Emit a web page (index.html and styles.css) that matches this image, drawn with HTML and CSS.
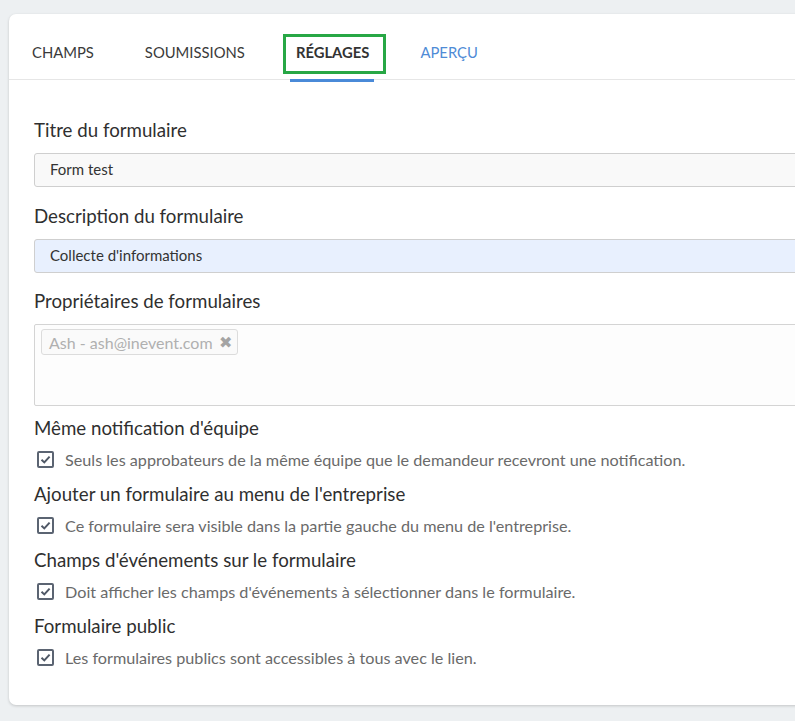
FILE: index.html
```html
<!DOCTYPE html>
<html lang="fr">
<head>
<meta charset="utf-8">
<title>Réglages</title>
<link rel="stylesheet" href="styles.css">
</head>
<body>
<div class="card">
  <nav class="tabs">
    <span class="tab">CHAMPS</span>
    <span class="tab">SOUMISSIONS</span>
    <span class="tab tab-active">RÉGLAGES</span>
    <span class="tab tab-link">APERÇU</span>
  </nav>
  <div class="content">
    <div class="field">
      <div class="label">Titre du formulaire</div>
      <div class="input">Form test</div>
    </div>
    <div class="field">
      <div class="label">Description du formulaire</div>
      <div class="input input-filled">Collecte d'informations</div>
    </div>
    <div class="field">
      <div class="label">Propriétaires de formulaires</div>
      <div class="tagbox">
        <span class="chip">Ash - ash@inevent.com <span class="chip-x">✖</span></span>
      </div>
    </div>
    <div class="options">
      <div class="option">
        <div class="label">Même notification d'équipe</div>
        <div class="check-row"><span class="checkbox"><svg viewBox="0 0 13 13" width="13" height="13"><path d="M2.5 6.8 L5.3 9.4 L10.6 3.6" fill="none" stroke="#4f5866" stroke-width="2"/></svg></span>Seuls les approbateurs de la même équipe que le demandeur recevront une notification.</div>
      </div>
      <div class="option">
        <div class="label">Ajouter un formulaire au menu de l'entreprise</div>
        <div class="check-row"><span class="checkbox"><svg viewBox="0 0 13 13" width="13" height="13"><path d="M2.5 6.8 L5.3 9.4 L10.6 3.6" fill="none" stroke="#4f5866" stroke-width="2"/></svg></span>Ce formulaire sera visible dans la partie gauche du menu de l'entreprise.</div>
      </div>
      <div class="option">
        <div class="label">Champs d'événements sur le formulaire</div>
        <div class="check-row"><span class="checkbox"><svg viewBox="0 0 13 13" width="13" height="13"><path d="M2.5 6.8 L5.3 9.4 L10.6 3.6" fill="none" stroke="#4f5866" stroke-width="2"/></svg></span>Doit afficher les champs d'événements à sélectionner dans le formulaire.</div>
      </div>
      <div class="option">
        <div class="label">Formulaire public</div>
        <div class="check-row"><span class="checkbox"><svg viewBox="0 0 13 13" width="13" height="13"><path d="M2.5 6.8 L5.3 9.4 L10.6 3.6" fill="none" stroke="#4f5866" stroke-width="2"/></svg></span>Les formulaires publics sont accessibles à tous avec le lien.</div>
      </div>
    </div>
  </div>
</div>
</body>
</html>
```
FILE: styles.css
```css
html, body {
  margin: 0;
  padding: 0;
  background: #edf0f2;
  overflow: hidden;
  height: 100%;
}
body {
  font-family: Lato, "Open Sans", Arial, sans-serif;
  color: #333;
  padding: 14px 0 0 9px;
  box-sizing: border-box;
}
.card {
  width: 900px;
  background: #fff;
  border-radius: 7px 0 0 7px;
  box-shadow: 0 1px 3px rgba(0,0,0,0.18);
  height: 691px;
  box-sizing: border-box;
}
.tabs {
  display: flex;
  gap: 51px;
  height: 66px;
  padding-left: 23px;
  border-bottom: 1px solid #e6e6e6;
  box-sizing: border-box;
  align-items: center;
}
.tab {
  position: relative;
  font-size: 14.8px;
  color: #3a3a3a;
  padding-top: 10px;
  height: 66px;
  line-height: 56px;
  box-sizing: border-box;
}
.tab-active {
  font-weight: bold;
  color: #333;
}
.tab-active::before {
  content: "";
  position: absolute;
  left: -13px;
  right: -17px;
  top: 20px;
  height: 40px;
  border: 3.5px solid #27a745;
  box-sizing: border-box;
}
.tab-active::after {
  content: "";
  position: absolute;
  left: -6px;
  right: -5px;
  bottom: -2px;
  height: 3px;
  background: #4a8ad8;
}
.tab-link {
  color: #4f8bd6;
}
.content {
  padding: 37px 0 0 25px;
}
.field {
  margin-bottom: 16px;
}
.field:nth-child(2) {
  margin-bottom: 15px;
}
.label {
  font-size: 18.7px;
  line-height: 26px;
  color: #2f2f2f;
}
.field .label {
  margin-bottom: 10px;
}
.input {
  height: 34px;
  border: 1px solid #cfcfcf;
  border-radius: 3px;
  background: #f9f9f9;
  box-sizing: border-box;
  padding-left: 15px;
  font-size: 15px;
  line-height: 31px;
  color: #333;
}
.input-filled {
  background: #e8f0fe;
}
.tagbox {
  height: 82px;
  border: 1px solid #d4d4d4;
  border-radius: 2px;
  box-sizing: border-box;
  background: #fdfdfd;
  padding: 4px 6px;
}
.chip {
  display: inline-flex;
  align-items: center;
  gap: 6px;
  height: 26px;
  border: 1px solid #dcdcdc;
  border-radius: 3px;
  background: #fafafa;
  box-sizing: border-box;
  padding: 0 5px 0 7px;
  font-size: 16px;
  color: #b0b0b0;
}
.chip-x {
  font-size: 16px;
  color: #a4a4a4;
}
.options {
  display: flex;
  flex-direction: column;
  gap: 9px;
  margin-top: -7px;
}
.option {
  display: flex;
  flex-direction: column;
  gap: 5px;
}
.check-row {
  display: flex;
  align-items: center;
  height: 26px;
  font-size: 16.2px;
  color: #6a6a6a;
  padding-left: 3px;
}
.checkbox {
  width: 17px;
  height: 17px;
  border: 2px solid #5b6472;
  border-radius: 2px;
  box-sizing: border-box;
  display: inline-flex;
  align-items: center;
  justify-content: center;
  margin-right: 11px;
  flex: none;
}
.checkbox svg {
  display: block;
}
```
